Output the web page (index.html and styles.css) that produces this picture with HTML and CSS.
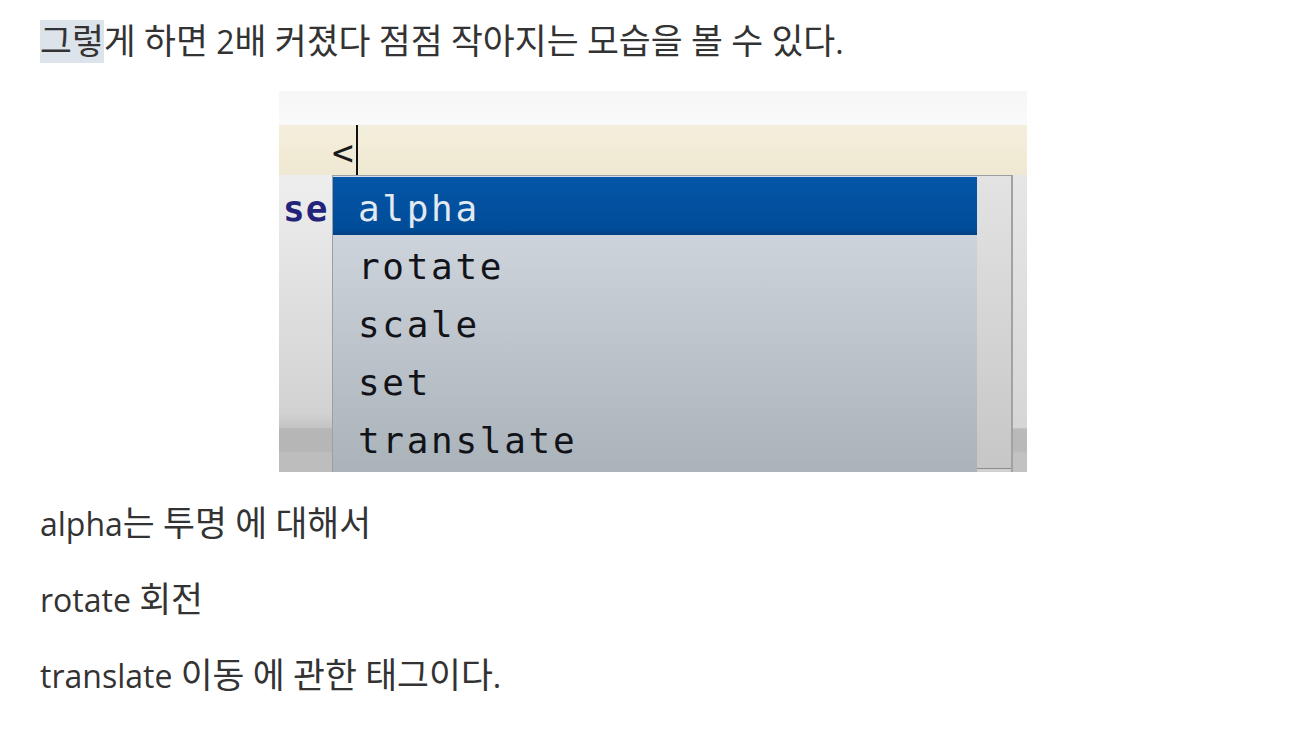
FILE: index.html
```html
<!DOCTYPE html>
<html lang="ko">
<head>
<meta charset="utf-8">
<title>animation</title>
<link rel="stylesheet" href="styles.css">
</head>
<body>
<main class="post">
  <p class="para"><span class="hl"><span class="ko">그렇</span></span><span class="ko">게</span> <span class="ko">하면</span> 2<span class="ko">배</span> <span class="ko">커졌다</span> <span class="ko">점점</span> <span class="ko">작아지는</span> <span class="ko">모습을</span> <span class="ko">볼</span> <span class="ko">수</span> <span class="ko">있다</span>.</p>
  <figure class="shot">
    <div class="ide">
      <div class="ide-top"></div>
      <div class="ide-line"><span class="lt">&lt;</span><span class="caret"></span></div>
      <div class="ide-body">
        <div class="gutter"><span class="kw">se</span></div>
        <div class="popup">
          <ul class="list">
            <li class="item sel">alpha</li>
            <li class="item">rotate</li>
            <li class="item">scale</li>
            <li class="item">set</li>
            <li class="item">translate</li>
          </ul>
          <div class="vscroll"><div class="vbtn"></div></div>
        </div>
        <div class="edge"></div>
      </div>
    </div>
  </figure>
  <p class="para">alpha<span class="ko">는</span> <span class="ko">투명</span> <span class="ko">에</span> <span class="ko">대해서</span></p>
  <p class="para">rotate <span class="ko">회전</span></p>
  <p class="para">translate <span class="ko">이동</span> <span class="ko">에</span> <span class="ko">관한</span> <span class="ko">태그이다</span>.</p>
</main>
</body>
</html>
```

FILE: styles.css
```css
html, body {
  margin: 0;
  padding: 0;
  background: #ffffff;
}

.post {
  padding: 19px 35px 0 40px;
  font-family: "Open Sans", "Noto Sans CJK KR", sans-serif;
  font-size: 32px;
  color: #333333;
}

.para {
  margin: 0;
  line-height: 45px;
  white-space: nowrap;
}

.para + .para {
  margin-top: 31px;
}

.ko {
  font-family: "Noto Sans CJK KR", sans-serif;
  font-size: 34.7px;
  line-height: 0;
}

.hl {
  background: #dce3ea;
}

.shot {
  margin: 27px 0 29px;
  display: flex;
  justify-content: center;
}

.ide {
  width: 748px;
  height: 381px;
  overflow: hidden;
  display: flex;
  flex-direction: column;
  font-family: "DejaVu Sans Mono", "Liberation Mono", monospace;
  font-size: 36px;
  letter-spacing: 2.7px;
}

.ide-top {
  height: 34px;
  flex: none;
  background: linear-gradient(#f6f6f6, #fafafa);
}

.ide-line {
  height: 50px;
  flex: none;
  display: flex;
  align-items: flex-start;
  padding-left: 53px;
  background: linear-gradient(#f4efdc, #efe8d2);
  color: #1a1a1a;
}

.lt {
  padding-top: 7px;
  line-height: 42px;
}

.caret {
  width: 2px;
  height: 50px;
  background: #111111;
}

.ide-body {
  flex: 1;
  display: flex;
  min-height: 0;
}

.gutter {
  width: 53px;
  flex: none;
  padding-top: 2px;
  box-sizing: border-box;
  background: linear-gradient(#eeeeee 0%, #d2d2d2 80%, #c4c4c4 85%, #b6b6b6 85.5%, #b6b6b6 93%, #bdbdbd 93.5%, #bdbdbd 100%);
  overflow: hidden;
}

.kw {
  display: block;
  padding: 8px 0 0 4px;
  line-height: 48px;
  font-weight: bold;
  color: #23237a;
  letter-spacing: 1px;
}

.popup {
  width: 681px;
  flex: none;
  display: flex;
  box-sizing: border-box;
  border-top: 1px solid #9aa0a6;
  border-left: 1px solid #9aa0a6;
}

.list {
  flex: 1;
  margin: 0;
  padding: 1px 0 0;
  list-style: none;
  background: linear-gradient(#d6dce3 0%, #c4cbd3 40%, #aab2ba 100%);
  color: #111318;
}

.item {
  height: 58px;
  box-sizing: border-box;
  padding: 8px 0 0 25px;
  line-height: 48px;
  white-space: nowrap;
}

.item.sel {
  background: linear-gradient(#0556a8, #004c98 90%, #003f82);
  color: #e3e9f1;
}

.vscroll {
  width: 36px;
  flex: none;
  box-sizing: border-box;
  border-right: 2px solid #a2a2a2;
  background: linear-gradient(#e3e3e3, #c6c6c6);
  display: flex;
  flex-direction: column;
}

.vbtn {
  margin-top: auto;
  height: 3px;
  border-top: 1px solid #8c8c8c;
  background: #d0d0d0;
}

.edge {
  flex: 1;
  background: linear-gradient(#e6e6e6 0%, #d6d6d6 85%, #b9b9b9 85.5%, #b9b9b9 93%, #c2c2c2 93.5%, #c2c2c2 100%);
}
```
